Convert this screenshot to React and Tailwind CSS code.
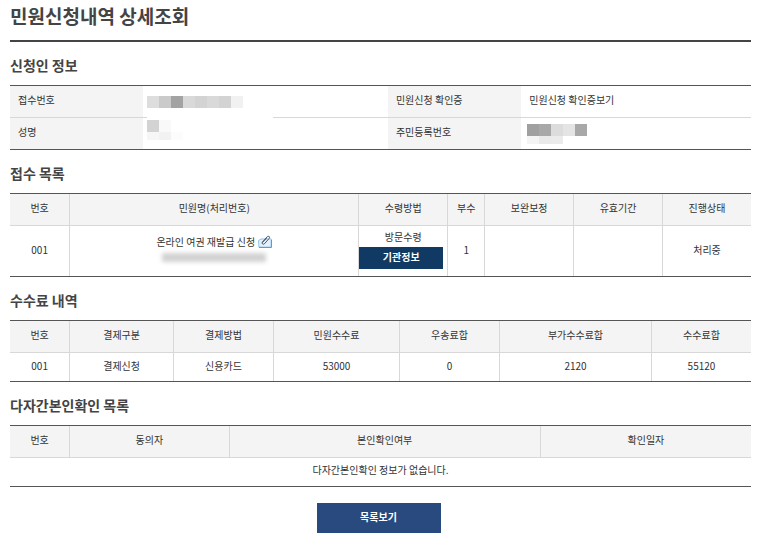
import React from "react";

const th = "border-b border-l border-[#d8d8d8] first:border-l-0 bg-[#f4f4f4] pb-1 font-normal";
const td = "border-l border-[#d8d8d8] first:border-l-0 pb-[3px]";
const rowTh = "bg-[#f4f4f4] px-2 pb-[3px] font-normal";

function Section({ title, children }) {
  return (
    <section className="flex flex-col gap-[10px]">
      <h2 className="text-[14px] leading-5 font-bold text-[#444]">{title}</h2>
      {children}
    </section>
  );
}

function Table({ label, cols, head, children }) {
  return (
    <table
      aria-label={label}
      className="w-full table-fixed border-separate border-spacing-0 border-y border-[#555] text-center"
    >
      <colgroup>
        {cols.map((c, i) => (
          <col key={i} className={c} />
        ))}
      </colgroup>
      <thead>
        <tr className="h-8">
          {head.map((h) => (
            <th key={h} scope="col" className={th}>{h}</th>
          ))}
        </tr>
      </thead>
      <tbody>{children}</tbody>
    </table>
  );
}

// hidden personal data, drawn as grey blocks
function Mosaic({ rows }) {
  return (
    <div aria-hidden="true">
      {rows.map((row, i) => (
        <div key={i} className="flex">
          {row.map((c, j) => (
            <span key={j} className={i === 0 ? "h-3 w-3" : "h-2 w-3"} style={{ background: c }} />
          ))}
        </div>
      ))}
    </div>
  );
}

function AttachIcon() {
  return (
    <svg width="14" height="13" viewBox="0 0 14 13" fill="none" aria-hidden="true">
      <path d="M0.5 5.5 L3 4 H13.3 V12.3 H1 Z" fill="#e4f2fd" stroke="#8cc2ee" />
      <path d="M1 12.4 H13.4 V5" stroke="#4a98de" />
      <path
        d="M4 7.5 L9.2 1.8 C10.6 0.4 12.4 1.8 11.2 3.4 L6.4 8.8 C5 10 3.4 8.6 4.6 7.2 L8.6 3.2"
        stroke="#4d5660"
      />
    </svg>
  );
}

export default function App() {
  return (
    <main className="pt-[3px] pr-[22px] pb-6 pl-[10px] font-['Noto_Sans_CJK_KR','Noto_Sans',sans-serif] text-[10px] leading-4 text-[#333]">
      <h1 className="border-b-2 border-[#444] pb-[11px] text-[19px] leading-[26px] font-bold text-[#444]">
        민원신청내역 상세조회
      </h1>

      <div className="mt-[13px] flex flex-col gap-[13px]">
        <Section title="신청인 정보">
          <table
            aria-label="신청인 정보"
            className="w-full table-fixed border-separate border-spacing-0 border-y border-[#555] text-left"
          >
            <colgroup>
              <col className="w-[18%]" />
              <col className="w-[33%]" />
              <col className="w-[18%]" />
              <col className="w-[31%]" />
            </colgroup>
            <tbody>
              <tr className="h-8">
                <th scope="row" className={`${rowTh} border-b border-[#d8d8d8]`}>접수번호</th>
                <td className="relative border-b border-[#d8d8d8]">
                  {/* the mask runs over both rows */}
                  <div className="absolute top-2 left-1 flex h-12 w-[126px] flex-col gap-3 bg-white pt-[2px]">
                    <Mosaic rows={[["#ddd", "#cacaca", "#a3a3a3", "#d9d9d9", "#d3d3d3", "#d9d9d9", "#d3d3d3", "#f1f1f1"]]} />
                    <Mosaic rows={[["#d3d3d3", "#f9f9f9"], ["#f6f6f6", "#f2f2f2", "#fcfcfc"]]} />
                  </div>
                </td>
                <th scope="row" className={`${rowTh} border-b border-[#d8d8d8]`}>민원신청 확인증</th>
                <td className="border-b border-[#d8d8d8] px-2 pb-[3px]">
                  <a href="#certificate">민원신청 확인증보기</a>
                </td>
              </tr>
              <tr className="h-[31px]">
                <th scope="row" className={rowTh}>성명</th>
                <td />
                <th scope="row" className={rowTh}>주민등록번호</th>
                <td className="px-[6px]">
                  <Mosaic rows={[["#a0a0a0", "#a8a8a8", "#dcdcdc", "#e4e4e4", "#a8a8a8"], ["#f4f4f4", "#e9e9e9", "#ebebeb"]]} />
                </td>
              </tr>
            </tbody>
          </table>
        </Section>

        <Section title="접수 목록">
          <Table
            label="접수 목록"
            cols={["w-[8%]", "w-[39%]", "w-[12%]", "w-[5%]", "w-[12%]", "w-[12%]", "w-[12%]"]}
            head={["번호", "민원명(처리번호)", "수령방법", "부수", "보완보정", "유효기간", "진행상태"]}
          >
            <tr className="h-[50px]">
              <td className={td}>001</td>
              <td className="border-l border-[#d8d8d8] pb-[7px]">
                <div className="flex items-center justify-center gap-[3px]">
                  <a href="#detail">온라인 여권 재발급 신청</a>
                  <AttachIcon />
                </div>
                <div className="mx-auto mt-[3px] h-[9px] w-[104px] bg-[#d2d2d2] blur-[2px]" />
              </td>
              <td className="border-l border-[#d8d8d8] pb-1">
                <div>방문수령</div>
                <div className="pt-[2px] pr-1">
                  <button type="button" className="block h-[22px] w-full bg-[#103a63] pb-[2px] font-bold text-white">
                    기관정보
                  </button>
                </div>
              </td>
              <td className={td}>1</td>
              <td className={td} />
              <td className={td} />
              <td className={td}>처리중</td>
            </tr>
          </Table>
        </Section>

        <Section title="수수료 내역">
          <Table
            label="수수료 내역"
            cols={["w-[8%]", "w-[14%]", "w-[13.5%]", "w-[17%]", "w-[13.5%]", "w-[20.5%]", "w-[13.5%]"]}
            head={["번호", "결제구분", "결제방법", "민원수수료", "우송료합", "부가수수료합", "수수료합"]}
          >
            <tr className="h-7">
              {["001", "결제신청", "신용카드", "53000", "0", "2120", "55120"].map((v) => (
                <td key={v} className={td}>{v}</td>
              ))}
            </tr>
          </Table>
        </Section>

        <Section title="다자간본인확인 목록">
          <Table
            label="다자간본인확인 목록"
            cols={["w-[8%]", "w-[21.5%]", "w-[42%]", "w-[28.5%]"]}
            head={["번호", "동의자", "본인확인여부", "확인일자"]}
          >
            <tr className="h-7">
              <td colSpan={4} className="pb-1">다자간본인확인 정보가 없습니다.</td>
            </tr>
          </Table>
        </Section>
      </div>

      <div className="mt-4 flex justify-center pr-1">
        <button type="button" className="h-[30px] w-[124px] bg-[#294a7e] pb-[2px] font-bold text-white">
          목록보기
        </button>
      </div>
    </main>
  );
}
